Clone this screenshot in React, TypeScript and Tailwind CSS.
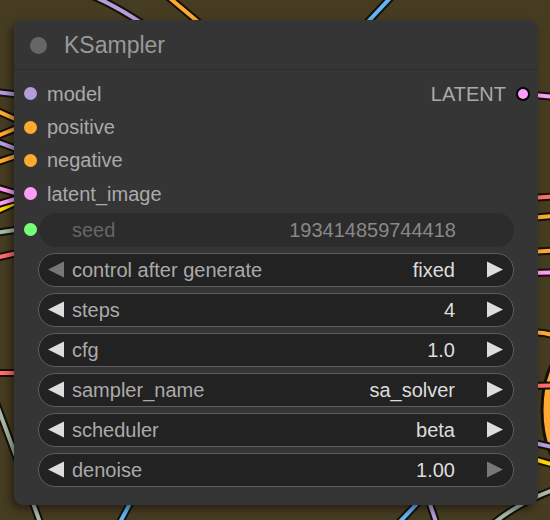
import React from "react";

const FONT = { fontFamily: '"Liberation Sans", Arial, sans-serif' };

type Wire = { d: string; c: string };
const wires: Wire[] = [
  { d: "M 90 -5 Q 115 5 146 26", c: "#b39ddb" },
  { d: "M 166 -5 L 203 26", c: "#ffa931" },
  { d: "M 393 -5 L 364 26", c: "#64b5f6" },
  { d: "M -5 92 L 22 95", c: "#b39ddb" },
  { d: "M -5 110 L 22 122", c: "#ffa931" },
  { d: "M -5 137 L 22 126", c: "#ffa931" },
  { d: "M -5 141 L 22 151", c: "#b39ddb" },
  { d: "M -5 163 L 22 154", c: "#ffa931" },
  { d: "M -5 187 L 22 195", c: "#ff9cf9" },
  { d: "M -5 212 L 22 200", c: "#ffd500" },
  { d: "M -5 205 L 22 197", c: "#ff9cf9" },
  { d: "M -5 233 L 22 229", c: "#a9b8a6" },
  { d: "M -5 258 L 22 252", c: "#ff6e6e" },
  { d: "M -5 373 L 22 373", c: "#ff6e6e" },
  { d: "M -8 392 Q 14 450 42 528", c: "#a9b8a6" },
  { d: "M 136 492 L 117 528", c: "#64b5f6" },
  { d: "M 428 492 L 394 528", c: "#64b5f6" },
  { d: "M 426 492 L 438 528", c: "#b39ddb" },
  { d: "M 488 528 Q 520 500 565 486", c: "#a9b8a6" },
  { d: "M 523 94 L 565 98", c: "#ff9cf9" },
  { d: "M 530 198 L 565 196", c: "#ff6e6e" },
  { d: "M 530 218 L 565 215", c: "#ffa931" },
  { d: "M 530 252 L 565 250", c: "#ffa931" },
  { d: "M 530 273 L 565 272", c: "#ff9cf9" },
  { d: "M 530 333 Q 548 330 565 342", c: "#ffa931" },
  { d: "M 530 386 L 565 385", c: "#ff6e6e" },
  { d: "M 530 442 L 565 450", c: "#b39ddb" },
  { d: "M 530 458 L 565 468", c: "#ffd500" },
];

function Background() {
  return (
    <svg className="absolute inset-0" width={550} height={520} viewBox="0 0 550 520">
      <ellipse cx={578} cy={410} rx={36} ry={68} fill="#ffa931" stroke="#111" strokeWidth={3} />
      {wires.map((w, i) => (
        <g key={i}>
          <path d={w.d} stroke="#141008" strokeWidth={8} fill="none" strokeLinecap="round" />
          <path d={w.d} stroke={w.c} strokeWidth={4} fill="none" strokeLinecap="round" />
        </g>
      ))}
    </svg>
  );
}

function LeftArrow({ color }: { color: string }) {
  return (
    <svg width={16} height={17} viewBox="0 0 16 17" className="shrink-0">
      <polygon points="0,8.5 16,0.5 16,16.5" fill={color} />
    </svg>
  );
}
function RightArrow({ color }: { color: string }) {
  return (
    <svg width={16} height={17} viewBox="0 0 16 17" className="shrink-0">
      <polygon points="16,8.5 0,0.5 0,16.5" fill={color} />
    </svg>
  );
}

function InputRow({ color, label, output }: { color: string; label: string; output?: string }) {
  return (
    <div className="flex h-[33.4px] items-center pl-[10px] pr-[8px]">
      <div className="h-[13px] w-[13px] rounded-full shrink-0" style={{ background: color }} />
      <span className="ml-[10px] text-[20px] text-[#aaaaaa] leading-none">{label}</span>
      {output && (
        <>
          <span className="ml-auto text-[20px] text-[#aaaaaa] leading-none">{output}</span>
          <div className="ml-[10px] h-[14px] w-[14px] rounded-full bg-[#ff9cf9] border-2 border-black shrink-0" />
        </>
      )}
    </div>
  );
}

function Widget({
  label,
  value,
  leftColor = "#dddddd",
  rightColor = "#dddddd",
}: {
  label: string;
  value: string;
  leftColor?: string;
  rightColor?: string;
}) {
  return (
    <div className="mx-[24px] flex h-[34px] items-center rounded-full border-[1.5px] border-[#5e5e5e] bg-[#222222] pl-[9px] pr-[10px]">
      <LeftArrow color={leftColor} />
      <span className="ml-[8px] text-[20px] text-[#aaaaaa] leading-none">{label}</span>
      <span className="ml-auto text-[20px] text-[#dddddd] leading-none">{value}</span>
      <span className="ml-[32px]">
        <RightArrow color={rightColor} />
      </span>
    </div>
  );
}

export default function App() {
  return (
    <div className="relative w-[550px] h-[520px] overflow-hidden bg-[#463c22]" style={FONT}>
      <Background />
      <div className="relative pt-[20px] pl-[14px]">
        <div className="w-[524px] h-[485px] rounded-[9px] bg-[#353535] shadow-[-3px_4px_8px_rgba(0,0,0,0.45)]">
          <div className="flex h-[50px] items-center border-b border-[#2b2b2b] pl-[16px] pt-[1px]">
            <div className="h-[17px] w-[17px] rounded-full bg-[#666666]" />
            <span className="ml-[17px] text-[23px] text-[#999999] leading-none">KSampler</span>
          </div>
          <div className="pt-[7px]">
            <InputRow color="#b39ddb" label="model" output="LATENT" />
            <InputRow color="#ffa931" label="positive" />
            <InputRow color="#ffa931" label="negative" />
            <InputRow color="#ff9cf9" label="latent_image" />
          </div>
          <div className="mt-[2px] flex h-[34px] items-center pl-[10px] pr-[24px]">
            <div className="h-[13px] w-[13px] rounded-full bg-[#77ff77] shrink-0" />
            <div className="ml-[2px] flex h-full flex-1 items-center rounded-full bg-[#2c2c2c] pl-[33px] pr-[58px]">
              <span className="text-[20px] text-[#666666] leading-none">seed</span>
              <span className="ml-auto text-[20px] text-[#888888] leading-none">193414859744418</span>
            </div>
          </div>
          <div className="mt-[6px] flex flex-col gap-[6px]">
            <Widget label="control after generate" value="fixed" leftColor="#777777" />
            <Widget label="steps" value="4" />
            <Widget label="cfg" value="1.0" />
            <Widget label="sampler_name" value="sa_solver" />
            <Widget label="scheduler" value="beta" />
            <Widget label="denoise" value="1.00" rightColor="#777777" />
          </div>
        </div>
      </div>
    </div>
  );
}
